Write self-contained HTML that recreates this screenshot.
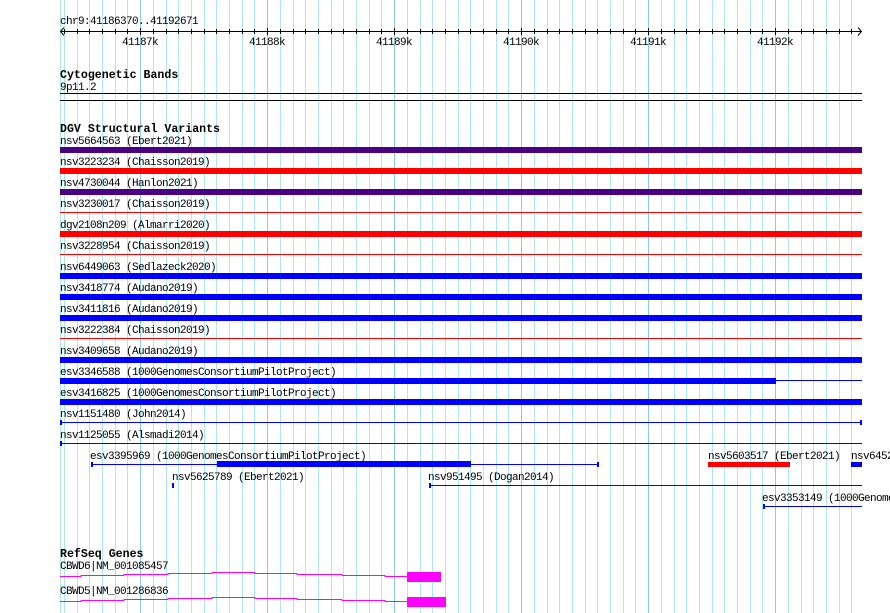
<!DOCTYPE html>
<html><head><meta charset="utf-8"><style>
html,body{margin:0;padding:0;background:#fff;width:890px;height:613px;overflow:hidden}
svg{display:block}
text{font-family:"Liberation Mono","DejaVu Sans Mono",monospace;font-size:11px;letter-spacing:-0.6px;fill:#000}
.b{font-weight:bold;font-size:11.6px;letter-spacing:0px}
</style></head><body>
<svg width="890" height="613" xmlns="http://www.w3.org/2000/svg" shape-rendering="crispEdges">
<g stroke="#aee8ef" stroke-width="1">
<path d="M60.5 0V613M64.5 0V613M77.5 0V613M89.5 0V613M102.5 0V613M115.5 0V613M127.5 0V613M153.5 0V613M166.5 0V613M178.5 0V613M191.5 0V613M204.5 0V613M216.5 0V613M229.5 0V613M242.5 0V613M254.5 0V613M280.5 0V613M293.5 0V613M305.5 0V613M318.5 0V613M331.5 0V613M343.5 0V613M356.5 0V613M369.5 0V613M381.5 0V613M407.5 0V613M420.5 0V613M432.5 0V613M445.5 0V613M458.5 0V613M470.5 0V613M483.5 0V613M496.5 0V613M508.5 0V613M534.5 0V613M547.5 0V613M559.5 0V613M572.5 0V613M585.5 0V613M597.5 0V613M610.5 0V613M623.5 0V613M635.5 0V613M661.5 0V613M674.5 0V613M686.5 0V613M699.5 0V613M712.5 0V613M724.5 0V613M737.5 0V613M750.5 0V613M762.5 0V613M788.5 0V613M801.5 0V613M813.5 0V613M826.5 0V613M839.5 0V613M851.5 0V613"/>
</g>
<g stroke="#8ccbe8"><path d="M140.5 0V613M267.5 0V613M394.5 0V613M521.5 0V613M648.5 0V613M775.5 0V613"/></g>

<text x="60" y="24">chr9:41186370..41192671</text>
<g stroke="#000" fill="none">
<path d="M60 31.5H862"/>
<path d="M64.5 29V34M77.5 29V34M89.5 29V34M102.5 29V34M115.5 29V34M127.5 29V34M140.5 28V35M153.5 29V34M166.5 29V34M178.5 29V34M191.5 29V34M204.5 29V34M216.5 29V34M229.5 29V34M242.5 29V34M254.5 29V34M267.5 28V35M280.5 29V34M293.5 29V34M305.5 29V34M318.5 29V34M331.5 29V34M343.5 29V34M356.5 29V34M369.5 29V34M381.5 29V34M394.5 28V35M407.5 29V34M420.5 29V34M432.5 29V34M445.5 29V34M458.5 29V34M470.5 29V34M483.5 29V34M496.5 29V34M508.5 29V34M521.5 28V35M534.5 29V34M547.5 29V34M559.5 29V34M572.5 29V34M585.5 29V34M597.5 29V34M610.5 29V34M623.5 29V34M635.5 29V34M648.5 28V35M661.5 29V34M674.5 29V34M686.5 29V34M699.5 29V34M712.5 29V34M724.5 29V34M737.5 29V34M750.5 29V34M762.5 29V34M775.5 28V35M788.5 29V34M801.5 29V34M813.5 29V34M826.5 29V34M839.5 29V34M851.5 29V34"/>
<path d="M64 27.5L60.5 31.5L64 35.5M858 27.5L861.5 31.5L858 35.5" shape-rendering="auto"/>
</g>
<g text-anchor="middle">
<text x="140" y="45">41187k</text><text x="267" y="45">41188k</text><text x="394" y="45">41189k</text><text x="521" y="45">41190k</text><text x="648" y="45">41191k</text><text x="775" y="45">41192k</text>
</g>

<text class="b" x="60" y="78">Cytogenetic Bands</text>
<text x="60" y="90">9p11.2</text>
<rect x="60" y="93" width="802" height="1" fill="#000"/>
<rect x="60" y="100" width="802" height="1" fill="#000"/>

<text class="b" x="60" y="132">DGV Structural Variants</text>
<text x="60" y="144">nsv5664563 (Ebert2021)</text>
<rect x="60" y="147" width="802" height="6" fill="#4b0082"/>
<text x="60" y="165">nsv3223234 (Chaisson2019)</text>
<rect x="60" y="168" width="802" height="6" fill="#ff0000"/>
<text x="60" y="186">nsv4730044 (Hanlon2021)</text>
<rect x="60" y="189" width="802" height="6" fill="#4b0082"/>
<text x="60" y="207">nsv3230017 (Chaisson2019)</text>
<rect x="60" y="212" width="802" height="1" fill="#ff0000"/>
<text x="60" y="228">dgv2108n209 (Almarri2020)</text>
<rect x="60" y="231" width="802" height="6" fill="#ff0000"/>
<text x="60" y="249">nsv3228954 (Chaisson2019)</text>
<rect x="60" y="254" width="802" height="1" fill="#ff0000"/>
<text x="60" y="270">nsv6449063 (Sedlazeck2020)</text>
<rect x="60" y="273" width="802" height="6" fill="#0000ff"/>
<text x="60" y="291">nsv3418774 (Audano2019)</text>
<rect x="60" y="294" width="802" height="6" fill="#0000ff"/>
<text x="60" y="312">nsv3411816 (Audano2019)</text>
<rect x="60" y="315" width="802" height="6" fill="#0000ff"/>
<text x="60" y="333">nsv3222384 (Chaisson2019)</text>
<rect x="60" y="338" width="802" height="1" fill="#ff0000"/>
<text x="60" y="354">nsv3409658 (Audano2019)</text>
<rect x="60" y="357" width="802" height="6" fill="#0000ff"/>
<text x="60" y="375">esv3346588 (1000GenomesConsortiumPilotProject)</text>
<rect x="60" y="378" width="716" height="6" fill="#0000ff"/>
<rect x="776" y="380" width="86" height="1" fill="#0000ff"/>
<text x="60" y="396">esv3416825 (1000GenomesConsortiumPilotProject)</text>
<rect x="60" y="399" width="802" height="6" fill="#0000ff"/>
<text x="60" y="417">nsv1151480 (John2014)</text>
<rect x="60" y="422" width="802" height="1" fill="#0000ff"/>
<rect x="60" y="420" width="2" height="5" fill="#0000ff"/>
<rect x="860" y="420" width="2" height="5" fill="#0000ff"/>
<text x="60" y="438">nsv1125055 (Alsmadi2014)</text>
<rect x="60" y="443" width="802" height="1" fill="#0000ff"/>
<rect x="60" y="441" width="2" height="5" fill="#0000ff"/>

<text x="90" y="459">esv3395969 (1000GenomesConsortiumPilotProject)</text>
<rect x="91" y="464" width="507" height="1" fill="#0000ff"/>
<rect x="91" y="462" width="2" height="5" fill="#0000ff"/>
<rect x="597" y="462" width="2" height="5" fill="#0000ff"/>
<rect x="217" y="461" width="254" height="6" fill="#0000ff"/>
<text x="708" y="459">nsv5603517 (Ebert2021)</text>
<rect x="708" y="462" width="82" height="5" fill="#ff0000"/>
<text x="851" y="459">nsv6452</text>
<rect x="851" y="462" width="11" height="5" fill="#0000ff"/>

<text x="172" y="480">nsv5625789 (Ebert2021)</text>
<rect x="172" y="483" width="2" height="5" fill="#0000ff"/>
<text x="428" y="480">nsv951495 (Dogan2014)</text>
<rect x="429" y="485" width="433" height="1" fill="#0000ff"/>
<rect x="429" y="483" width="2" height="5" fill="#0000ff"/>
<text x="762" y="501">esv3353149 (1000Genome</text>
<rect x="763" y="506" width="99" height="1" fill="#0000ff"/>
<rect x="763" y="504" width="2" height="5" fill="#0000ff"/>

<text class="b" x="60" y="557">RefSeq Genes</text>
<text x="60" y="569">CBWD6|NM_001085457</text>
<path d="M60 576.5H81V575.5H124V574.5H168V573.5H212V572.5H255V573.5H297V574.5H342V575.5H385V576.5H407" stroke="#ff00ff" fill="none"/>
<rect x="407" y="572" width="34" height="10" fill="#ff00ff"/>
<text x="60" y="594">CBWD5|NM_001286836</text>
<path d="M60 601.5H81V600.5H124V599.5H168V598.5H212V597.5H255V598.5H297V599.5H342V600.5H385V601.5H407" stroke="#ff00ff" fill="none"/>
<rect x="407" y="597" width="39" height="10" fill="#ff00ff"/>
</svg>
</body></html>
